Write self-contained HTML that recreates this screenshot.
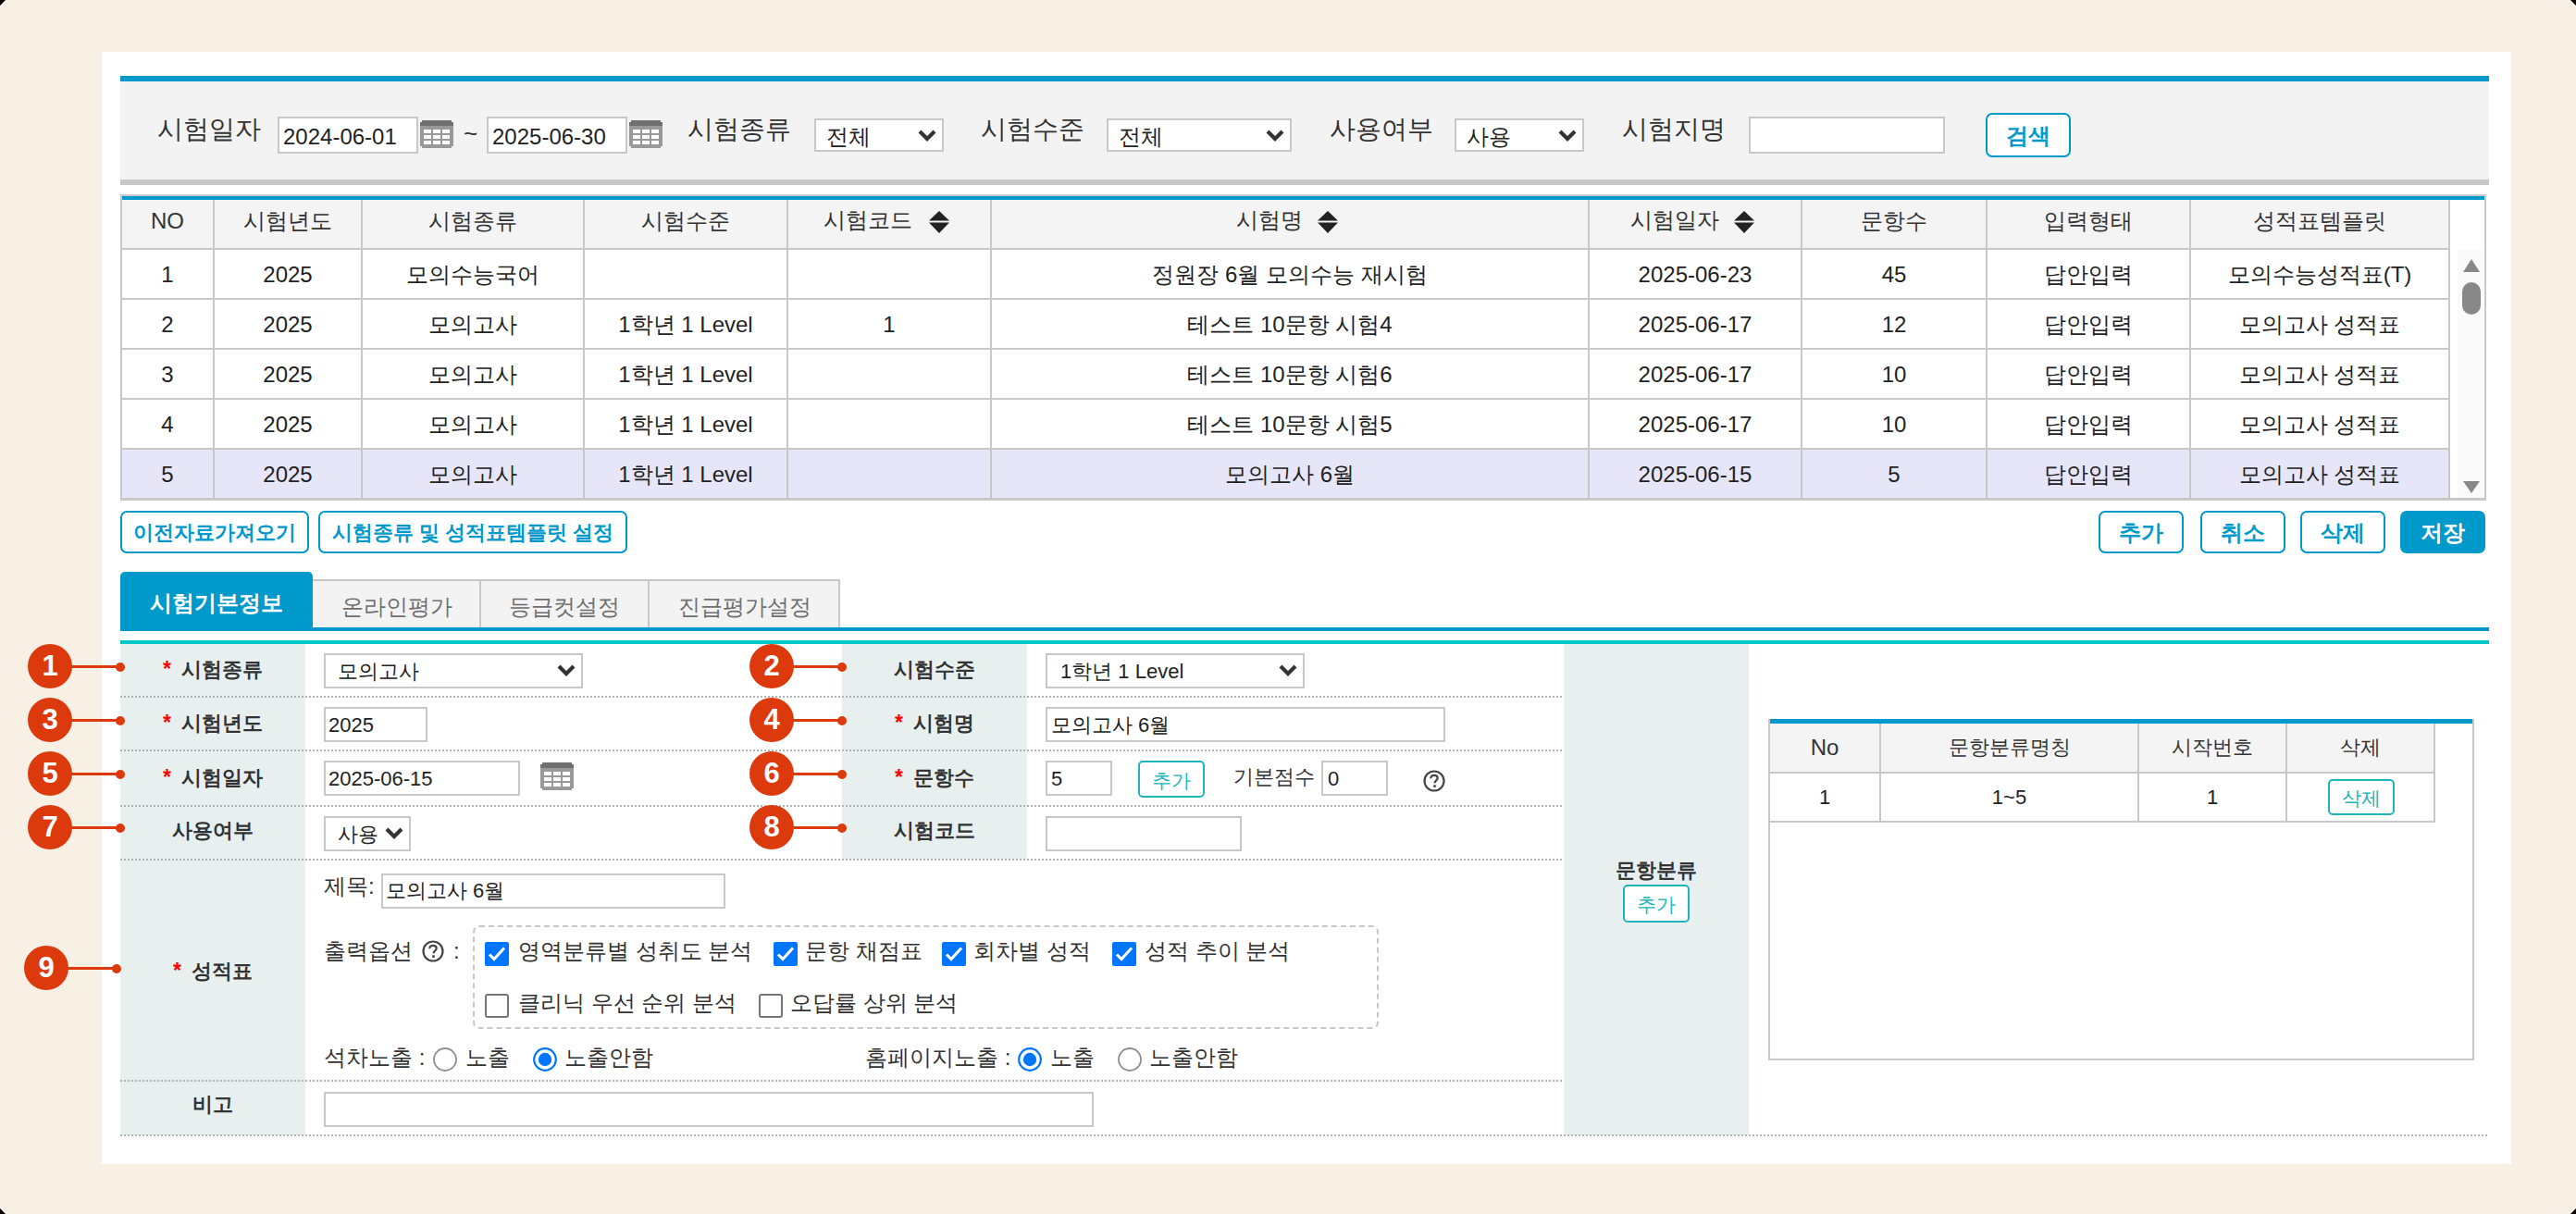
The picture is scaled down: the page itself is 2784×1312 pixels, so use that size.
<!DOCTYPE html>
<html><head><meta charset="utf-8"><title>시험관리</title>
<style>
*{margin:0;padding:0;box-sizing:border-box}
html,body{width:2784px;height:1312px;overflow:hidden}
body{background:#f8efe5;position:relative;font-family:"Liberation Sans",sans-serif;color:#333}
.a{position:absolute}
.t{position:absolute;white-space:nowrap}
</style></head><body>
<svg class="a" style="left:0;top:0" width="7" height="7"><path d="M0 0H6L0 6Z" fill="#000"/></svg>
<svg class="a" style="left:2777px;top:0" width="7" height="7"><path d="M1 0H7V6Z" fill="#000"/></svg>
<svg class="a" style="left:0;top:1305px" width="7" height="7"><path d="M0 1V7H6Z" fill="#000"/></svg>
<svg class="a" style="left:2777px;top:1305px" width="7" height="7"><path d="M7 1V7H1Z" fill="#000"/></svg>
<div class="a" style="left:110px;top:56px;width:2604px;height:1202px;background:#fff"></div>
<div class="a" style="left:130px;top:82px;width:2560px;height:6px;background:#0099cc"></div>
<div class="a" style="left:130px;top:88px;width:2560px;height:106px;background:#f3f3f3"></div>
<div class="a" style="left:130px;top:194px;width:2560px;height:6px;background:#c8c8c8"></div>
<div class="t" style="left:170px;top:126.0px;height:28px;font-size:28px;line-height:28px;">시험일자</div>
<div class="a" style="left:300px;top:126px;width:152px;height:40px;background:#fff;border:2px solid #c8c8c8"></div>
<div class="t" style="left:306px;top:135.5px;height:24px;font-size:24px;line-height:24px;color:#222;">2024-06-01</div>
<svg class="a" style="left:454px;top:130px" width="36" height="30" viewBox="0 0 36 30"><path d="M2 0H34V2H36V28H34V30H2V28H0V2H2Z" fill="#999"/><path d="M2 0H34V2H36V6H0V2H2Z" fill="#707070"/><rect x="4" y="10" width="8" height="4" fill="#fff"/><rect x="4" y="16" width="8" height="4" fill="#fff"/><rect x="4" y="22" width="8" height="4" fill="#fff"/><rect x="14" y="10" width="8" height="4" fill="#fff"/><rect x="14" y="16" width="8" height="4" fill="#fff"/><rect x="14" y="22" width="8" height="4" fill="#fff"/><rect x="24" y="10" width="8" height="4" fill="#fff"/><rect x="24" y="16" width="8" height="4" fill="#fff"/><rect x="24" y="22" width="8" height="4" fill="#fff"/></svg>
<div class="t" style="left:501px;top:130.5px;height:26px;font-size:26px;line-height:26px;">~</div>
<div class="a" style="left:526px;top:126px;width:152px;height:40px;background:#fff;border:2px solid #c8c8c8"></div>
<div class="t" style="left:532px;top:135.5px;height:24px;font-size:24px;line-height:24px;color:#222;">2025-06-30</div>
<svg class="a" style="left:680px;top:130px" width="36" height="30" viewBox="0 0 36 30"><path d="M2 0H34V2H36V28H34V30H2V28H0V2H2Z" fill="#999"/><path d="M2 0H34V2H36V6H0V2H2Z" fill="#707070"/><rect x="4" y="10" width="8" height="4" fill="#fff"/><rect x="4" y="16" width="8" height="4" fill="#fff"/><rect x="4" y="22" width="8" height="4" fill="#fff"/><rect x="14" y="10" width="8" height="4" fill="#fff"/><rect x="14" y="16" width="8" height="4" fill="#fff"/><rect x="14" y="22" width="8" height="4" fill="#fff"/><rect x="24" y="10" width="8" height="4" fill="#fff"/><rect x="24" y="16" width="8" height="4" fill="#fff"/><rect x="24" y="22" width="8" height="4" fill="#fff"/></svg>
<div class="t" style="left:743px;top:126.0px;height:28px;font-size:28px;line-height:28px;">시험종류</div>
<div class="a" style="left:880px;top:128px;width:140px;height:36px;background:#fff;border:2px solid #c8c8c8"></div>
<div class="t" style="left:893px;top:135.5px;height:24px;font-size:24px;line-height:24px;color:#222;">전체</div>
<svg class="a" style="left:992px;top:140px" width="20" height="13" viewBox="0 0 20 13"><path d="M2 2 L10 10 L18 2" fill="none" stroke="#333" stroke-width="4.2"/></svg>
<div class="t" style="left:1060px;top:126.0px;height:28px;font-size:28px;line-height:28px;">시험수준</div>
<div class="a" style="left:1196px;top:128px;width:200px;height:36px;background:#fff;border:2px solid #c8c8c8"></div>
<div class="t" style="left:1209px;top:135.5px;height:24px;font-size:24px;line-height:24px;color:#222;">전체</div>
<svg class="a" style="left:1368px;top:140px" width="20" height="13" viewBox="0 0 20 13"><path d="M2 2 L10 10 L18 2" fill="none" stroke="#333" stroke-width="4.2"/></svg>
<div class="t" style="left:1437px;top:126.0px;height:28px;font-size:28px;line-height:28px;">사용여부</div>
<div class="a" style="left:1572px;top:128px;width:140px;height:36px;background:#fff;border:2px solid #c8c8c8"></div>
<div class="t" style="left:1585px;top:135.5px;height:24px;font-size:24px;line-height:24px;color:#222;">사용</div>
<svg class="a" style="left:1684px;top:140px" width="20" height="13" viewBox="0 0 20 13"><path d="M2 2 L10 10 L18 2" fill="none" stroke="#333" stroke-width="4.2"/></svg>
<div class="t" style="left:1753px;top:126.0px;height:28px;font-size:28px;line-height:28px;">시험지명</div>
<div class="a" style="left:1890px;top:126px;width:212px;height:40px;background:#fff;border:2px solid #c8c8c8"></div>
<div class="a" style="left:2146px;top:122px;width:92px;height:48px;background:#fff;border:2px solid #0099cc;border-radius:7px"></div>
<div class="t" style="left:2146px;width:92px;text-align:center;top:135.0px;height:24px;font-size:24px;line-height:24px;font-weight:700;color:#0099cc;">검색</div>
<div class="a" style="left:130px;top:210px;width:2557px;height:331px;background:#fff;border:2px solid #c8c8c8;border-bottom-width:3px"></div>
<div class="a" style="left:132px;top:212px;width:2553px;height:4px;background:#0099cc"></div>
<div class="a" style="left:132px;top:216px;width:2514px;height:52px;background:#f4f4f4"></div>
<div class="a" style="left:132px;top:484px;width:2514px;height:54px;background:#e6e6f8"></div>
<div class="a" style="left:2656px;top:270px;width:28px;height:268px;background:#fafafa"></div>
<div class="a" style="left:230px;top:216px;width:2px;height:322px;background:#c8c8c8"></div>
<div class="a" style="left:390px;top:216px;width:2px;height:322px;background:#c8c8c8"></div>
<div class="a" style="left:630px;top:216px;width:2px;height:322px;background:#c8c8c8"></div>
<div class="a" style="left:850px;top:216px;width:2px;height:322px;background:#c8c8c8"></div>
<div class="a" style="left:1070px;top:216px;width:2px;height:322px;background:#c8c8c8"></div>
<div class="a" style="left:1716px;top:216px;width:2px;height:322px;background:#c8c8c8"></div>
<div class="a" style="left:1946px;top:216px;width:2px;height:322px;background:#c8c8c8"></div>
<div class="a" style="left:2146px;top:216px;width:2px;height:322px;background:#c8c8c8"></div>
<div class="a" style="left:2366px;top:216px;width:2px;height:322px;background:#c8c8c8"></div>
<div class="a" style="left:2646px;top:216px;width:2px;height:322px;background:#c8c8c8"></div>
<div class="a" style="left:132px;top:268px;width:2514px;height:2px;background:#c8c8c8"></div>
<div class="a" style="left:132px;top:322px;width:2514px;height:2px;background:#c8c8c8"></div>
<div class="a" style="left:132px;top:376px;width:2514px;height:2px;background:#c8c8c8"></div>
<div class="a" style="left:132px;top:430px;width:2514px;height:2px;background:#c8c8c8"></div>
<div class="a" style="left:132px;top:484px;width:2514px;height:2px;background:#c8c8c8"></div>
<div class="t" style="left:132px;width:98px;text-align:center;top:227.0px;height:24px;font-size:24px;line-height:24px;">NO</div>
<div class="t" style="left:232px;width:158px;text-align:center;top:227.0px;height:24px;font-size:24px;line-height:24px;">시험년도</div>
<div class="t" style="left:392px;width:238px;text-align:center;top:227.0px;height:24px;font-size:24px;line-height:24px;">시험종류</div>
<div class="t" style="left:632px;width:218px;text-align:center;top:227.0px;height:24px;font-size:24px;line-height:24px;">시험수준</div>
<div class="t" style="left:890px;top:226.0px;height:24px;font-size:24px;line-height:24px;">시험코드</div>
<svg class="a" style="left:1004px;top:228px" width="22" height="24" viewBox="0 0 22 24"><path d="M0 10.5L11 0L22 10.5Z M0 12.5H22L11 24Z" fill="#222"/></svg>
<div class="t" style="left:1336px;top:226.0px;height:24px;font-size:24px;line-height:24px;">시험명</div>
<svg class="a" style="left:1424px;top:228px" width="22" height="24" viewBox="0 0 22 24"><path d="M0 10.5L11 0L22 10.5Z M0 12.5H22L11 24Z" fill="#222"/></svg>
<div class="t" style="left:1762px;top:226.0px;height:24px;font-size:24px;line-height:24px;">시험일자</div>
<svg class="a" style="left:1874px;top:228px" width="22" height="24" viewBox="0 0 22 24"><path d="M0 10.5L11 0L22 10.5Z M0 12.5H22L11 24Z" fill="#222"/></svg>
<div class="t" style="left:1948px;width:198px;text-align:center;top:227.0px;height:24px;font-size:24px;line-height:24px;">문항수</div>
<div class="t" style="left:2148px;width:218px;text-align:center;top:227.0px;height:24px;font-size:24px;line-height:24px;">입력형태</div>
<div class="t" style="left:2368px;width:278px;text-align:center;top:227.0px;height:24px;font-size:24px;line-height:24px;">성적표템플릿</div>
<div class="t" style="left:132px;width:98px;text-align:center;top:285.0px;height:24px;font-size:24px;line-height:24px;color:#222;">1</div>
<div class="t" style="left:232px;width:158px;text-align:center;top:285.0px;height:24px;font-size:24px;line-height:24px;color:#222;">2025</div>
<div class="t" style="left:392px;width:238px;text-align:center;top:285.0px;height:24px;font-size:24px;line-height:24px;color:#222;">모의수능국어</div>
<div class="t" style="left:1072px;width:644px;text-align:center;top:285.0px;height:24px;font-size:24px;line-height:24px;color:#222;">정원장 6월 모의수능 재시험</div>
<div class="t" style="left:1718px;width:228px;text-align:center;top:285.0px;height:24px;font-size:24px;line-height:24px;color:#222;">2025-06-23</div>
<div class="t" style="left:1948px;width:198px;text-align:center;top:285.0px;height:24px;font-size:24px;line-height:24px;color:#222;">45</div>
<div class="t" style="left:2148px;width:218px;text-align:center;top:285.0px;height:24px;font-size:24px;line-height:24px;color:#222;">답안입력</div>
<div class="t" style="left:2368px;width:278px;text-align:center;top:285.0px;height:24px;font-size:24px;line-height:24px;color:#222;">모의수능성적표(T)</div>
<div class="t" style="left:132px;width:98px;text-align:center;top:339.0px;height:24px;font-size:24px;line-height:24px;color:#222;">2</div>
<div class="t" style="left:232px;width:158px;text-align:center;top:339.0px;height:24px;font-size:24px;line-height:24px;color:#222;">2025</div>
<div class="t" style="left:392px;width:238px;text-align:center;top:339.0px;height:24px;font-size:24px;line-height:24px;color:#222;">모의고사</div>
<div class="t" style="left:632px;width:218px;text-align:center;top:339.0px;height:24px;font-size:24px;line-height:24px;color:#222;">1학년 1 Level</div>
<div class="t" style="left:852px;width:218px;text-align:center;top:339.0px;height:24px;font-size:24px;line-height:24px;color:#222;">1</div>
<div class="t" style="left:1072px;width:644px;text-align:center;top:339.0px;height:24px;font-size:24px;line-height:24px;color:#222;">테스트 10문항 시험4</div>
<div class="t" style="left:1718px;width:228px;text-align:center;top:339.0px;height:24px;font-size:24px;line-height:24px;color:#222;">2025-06-17</div>
<div class="t" style="left:1948px;width:198px;text-align:center;top:339.0px;height:24px;font-size:24px;line-height:24px;color:#222;">12</div>
<div class="t" style="left:2148px;width:218px;text-align:center;top:339.0px;height:24px;font-size:24px;line-height:24px;color:#222;">답안입력</div>
<div class="t" style="left:2368px;width:278px;text-align:center;top:339.0px;height:24px;font-size:24px;line-height:24px;color:#222;">모의고사 성적표</div>
<div class="t" style="left:132px;width:98px;text-align:center;top:393.0px;height:24px;font-size:24px;line-height:24px;color:#222;">3</div>
<div class="t" style="left:232px;width:158px;text-align:center;top:393.0px;height:24px;font-size:24px;line-height:24px;color:#222;">2025</div>
<div class="t" style="left:392px;width:238px;text-align:center;top:393.0px;height:24px;font-size:24px;line-height:24px;color:#222;">모의고사</div>
<div class="t" style="left:632px;width:218px;text-align:center;top:393.0px;height:24px;font-size:24px;line-height:24px;color:#222;">1학년 1 Level</div>
<div class="t" style="left:1072px;width:644px;text-align:center;top:393.0px;height:24px;font-size:24px;line-height:24px;color:#222;">테스트 10문항 시험6</div>
<div class="t" style="left:1718px;width:228px;text-align:center;top:393.0px;height:24px;font-size:24px;line-height:24px;color:#222;">2025-06-17</div>
<div class="t" style="left:1948px;width:198px;text-align:center;top:393.0px;height:24px;font-size:24px;line-height:24px;color:#222;">10</div>
<div class="t" style="left:2148px;width:218px;text-align:center;top:393.0px;height:24px;font-size:24px;line-height:24px;color:#222;">답안입력</div>
<div class="t" style="left:2368px;width:278px;text-align:center;top:393.0px;height:24px;font-size:24px;line-height:24px;color:#222;">모의고사 성적표</div>
<div class="t" style="left:132px;width:98px;text-align:center;top:447.0px;height:24px;font-size:24px;line-height:24px;color:#222;">4</div>
<div class="t" style="left:232px;width:158px;text-align:center;top:447.0px;height:24px;font-size:24px;line-height:24px;color:#222;">2025</div>
<div class="t" style="left:392px;width:238px;text-align:center;top:447.0px;height:24px;font-size:24px;line-height:24px;color:#222;">모의고사</div>
<div class="t" style="left:632px;width:218px;text-align:center;top:447.0px;height:24px;font-size:24px;line-height:24px;color:#222;">1학년 1 Level</div>
<div class="t" style="left:1072px;width:644px;text-align:center;top:447.0px;height:24px;font-size:24px;line-height:24px;color:#222;">테스트 10문항 시험5</div>
<div class="t" style="left:1718px;width:228px;text-align:center;top:447.0px;height:24px;font-size:24px;line-height:24px;color:#222;">2025-06-17</div>
<div class="t" style="left:1948px;width:198px;text-align:center;top:447.0px;height:24px;font-size:24px;line-height:24px;color:#222;">10</div>
<div class="t" style="left:2148px;width:218px;text-align:center;top:447.0px;height:24px;font-size:24px;line-height:24px;color:#222;">답안입력</div>
<div class="t" style="left:2368px;width:278px;text-align:center;top:447.0px;height:24px;font-size:24px;line-height:24px;color:#222;">모의고사 성적표</div>
<div class="t" style="left:132px;width:98px;text-align:center;top:501.0px;height:24px;font-size:24px;line-height:24px;color:#222;">5</div>
<div class="t" style="left:232px;width:158px;text-align:center;top:501.0px;height:24px;font-size:24px;line-height:24px;color:#222;">2025</div>
<div class="t" style="left:392px;width:238px;text-align:center;top:501.0px;height:24px;font-size:24px;line-height:24px;color:#222;">모의고사</div>
<div class="t" style="left:632px;width:218px;text-align:center;top:501.0px;height:24px;font-size:24px;line-height:24px;color:#222;">1학년 1 Level</div>
<div class="t" style="left:1072px;width:644px;text-align:center;top:501.0px;height:24px;font-size:24px;line-height:24px;color:#222;">모의고사 6월</div>
<div class="t" style="left:1718px;width:228px;text-align:center;top:501.0px;height:24px;font-size:24px;line-height:24px;color:#222;">2025-06-15</div>
<div class="t" style="left:1948px;width:198px;text-align:center;top:501.0px;height:24px;font-size:24px;line-height:24px;color:#222;">5</div>
<div class="t" style="left:2148px;width:218px;text-align:center;top:501.0px;height:24px;font-size:24px;line-height:24px;color:#222;">답안입력</div>
<div class="t" style="left:2368px;width:278px;text-align:center;top:501.0px;height:24px;font-size:24px;line-height:24px;color:#222;">모의고사 성적표</div>
<svg class="a" style="left:2661px;top:279px" width="20" height="16" viewBox="0 0 20 16"><path d="M10 1L19 15H1Z" fill="#888"/></svg>
<div class="a" style="left:2661px;top:305px;width:20px;height:35px;background:#888;border-radius:10px"></div>
<svg class="a" style="left:2661px;top:519px" width="20" height="15" viewBox="0 0 20 15"><path d="M1 1H19L10 14Z" fill="#888"/></svg>
<div class="a" style="left:130px;top:552px;width:204px;height:46px;background:#fff;border:2px solid #0099cc;border-radius:7px"></div>
<div class="t" style="left:130px;width:204px;text-align:center;top:565.0px;height:22px;font-size:22px;line-height:22px;font-weight:700;color:#0099cc;">이전자료가져오기</div>
<div class="a" style="left:344px;top:552px;width:334px;height:46px;background:#fff;border:2px solid #0099cc;border-radius:7px"></div>
<div class="t" style="left:344px;width:334px;text-align:center;top:565.0px;height:22px;font-size:22px;line-height:22px;font-weight:700;color:#0099cc;">시험종류 및 성적표템플릿 설정</div>
<div class="a" style="left:2268px;top:552px;width:92px;height:46px;background:#fff;border:2px solid #0099cc;border-radius:7px"></div>
<div class="t" style="left:2268px;width:92px;text-align:center;top:564.0px;height:24px;font-size:24px;line-height:24px;font-weight:700;color:#0099cc;">추가</div>
<div class="a" style="left:2378px;top:552px;width:92px;height:46px;background:#fff;border:2px solid #0099cc;border-radius:7px"></div>
<div class="t" style="left:2378px;width:92px;text-align:center;top:564.0px;height:24px;font-size:24px;line-height:24px;font-weight:700;color:#0099cc;">취소</div>
<div class="a" style="left:2486px;top:552px;width:92px;height:46px;background:#fff;border:2px solid #0099cc;border-radius:7px"></div>
<div class="t" style="left:2486px;width:92px;text-align:center;top:564.0px;height:24px;font-size:24px;line-height:24px;font-weight:700;color:#0099cc;">삭제</div>
<div class="a" style="left:2594px;top:552px;width:92px;height:46px;background:#0099cc;border-radius:7px"></div>
<div class="t" style="left:2594px;width:92px;text-align:center;top:564.0px;height:24px;font-size:24px;line-height:24px;font-weight:700;color:#fff;">저장</div>
<div class="a" style="left:338px;top:626px;width:570px;height:54px;background:#f3f3f3;border:2px solid #c8c8c8;border-bottom:none;border-left:none"></div>
<div class="a" style="left:518px;top:626px;width:2px;height:54px;background:#c8c8c8"></div>
<div class="a" style="left:700px;top:626px;width:2px;height:54px;background:#c8c8c8"></div>
<div class="a" style="left:130px;top:618px;width:208px;height:64px;background:#0099cc;border-radius:5px 5px 0 0"></div>
<div class="t" style="left:130px;width:208px;text-align:center;top:640.0px;height:24px;font-size:24px;line-height:24px;font-weight:700;color:#fff;">시험기본정보</div>
<div class="t" style="left:338px;width:181px;text-align:center;top:644.0px;height:24px;font-size:24px;line-height:24px;color:#6f6f6f;">온라인평가</div>
<div class="t" style="left:519px;width:182px;text-align:center;top:644.0px;height:24px;font-size:24px;line-height:24px;color:#6f6f6f;">등급컷설정</div>
<div class="t" style="left:701px;width:207px;text-align:center;top:644.0px;height:24px;font-size:24px;line-height:24px;color:#6f6f6f;">진급평가설정</div>
<div class="a" style="left:130px;top:678px;width:2560px;height:4px;background:#0099cc"></div>
<div class="a" style="left:130px;top:692px;width:2560px;height:4px;background:#00c8c8"></div>
<div class="a" style="left:130px;top:696px;width:200px;height:531px;background:#e8f0ef"></div>
<div class="a" style="left:910px;top:696px;width:200px;height:233px;background:#e8f0ef"></div>
<div class="a" style="left:1690px;top:696px;width:200px;height:531px;background:#e8f0ef"></div>
<div class="a" style="left:130px;top:752px;width:1560px;height:2px;background-image:linear-gradient(90deg,#b4b4b4 50%,transparent 50%);background-size:4px 2px"></div>
<div class="a" style="left:130px;top:810px;width:1560px;height:2px;background-image:linear-gradient(90deg,#b4b4b4 50%,transparent 50%);background-size:4px 2px"></div>
<div class="a" style="left:130px;top:870px;width:1560px;height:2px;background-image:linear-gradient(90deg,#b4b4b4 50%,transparent 50%);background-size:4px 2px"></div>
<div class="a" style="left:130px;top:928px;width:1560px;height:2px;background-image:linear-gradient(90deg,#b4b4b4 50%,transparent 50%);background-size:4px 2px"></div>
<div class="a" style="left:130px;top:1167px;width:1560px;height:2px;background-image:linear-gradient(90deg,#b4b4b4 50%,transparent 50%);background-size:4px 2px"></div>
<div class="a" style="left:130px;top:1226px;width:2560px;height:2px;background-image:linear-gradient(90deg,#b4b4b4 50%,transparent 50%);background-size:4px 2px"></div>
<div class="t" style="left:130px;width:200px;text-align:center;top:712px;height:22px;font-size:22px;line-height:22px;font-weight:700"><span style="color:#f00;font-size:23px;position:relative;top:0px;margin-right:5px">*</span> 시험종류</div>
<div class="t" style="left:130px;width:200px;text-align:center;top:770px;height:22px;font-size:22px;line-height:22px;font-weight:700"><span style="color:#f00;font-size:23px;position:relative;top:0px;margin-right:5px">*</span> 시험년도</div>
<div class="t" style="left:130px;width:200px;text-align:center;top:829px;height:22px;font-size:22px;line-height:22px;font-weight:700"><span style="color:#f00;font-size:23px;position:relative;top:0px;margin-right:5px">*</span> 시험일자</div>
<div class="t" style="left:130px;width:200px;text-align:center;top:887.0px;height:22px;font-size:22px;line-height:22px;font-weight:700;">사용여부</div>
<div class="t" style="left:130px;width:200px;text-align:center;top:1038px;height:22px;font-size:22px;line-height:22px;font-weight:700"><span style="color:#f00;font-size:23px;position:relative;top:0px;margin-right:5px">*</span> 성적표</div>
<div class="t" style="left:130px;width:200px;text-align:center;top:1183.0px;height:22px;font-size:22px;line-height:22px;font-weight:700;">비고</div>
<div class="t" style="left:910px;width:200px;text-align:center;top:712.5px;height:22px;font-size:22px;line-height:22px;font-weight:700;">시험수준</div>
<div class="t" style="left:910px;width:200px;text-align:center;top:769.5px;height:22px;font-size:22px;line-height:22px;font-weight:700"><span style="color:#f00;font-size:23px;position:relative;top:0px;margin-right:5px">*</span> 시험명</div>
<div class="t" style="left:910px;width:200px;text-align:center;top:829px;height:22px;font-size:22px;line-height:22px;font-weight:700"><span style="color:#f00;font-size:23px;position:relative;top:0px;margin-right:5px">*</span> 문항수</div>
<div class="t" style="left:910px;width:200px;text-align:center;top:887.0px;height:22px;font-size:22px;line-height:22px;font-weight:700;">시험코드</div>
<div class="a" style="left:350px;top:706px;width:280px;height:38px;background:#fff;border:2px solid #c8c8c8"></div>
<div class="t" style="left:365px;top:715.0px;height:22px;font-size:22px;line-height:22px;color:#222;">모의고사</div>
<svg class="a" style="left:602px;top:718px" width="20" height="13" viewBox="0 0 20 13"><path d="M2 2 L10 10 L18 2" fill="none" stroke="#333" stroke-width="4.2"/></svg>
<div class="a" style="left:350px;top:764px;width:112px;height:38px;background:#fff;border:2px solid #c8c8c8"></div>
<div class="t" style="left:355px;top:773.0px;height:22px;font-size:22px;line-height:22px;color:#222;">2025</div>
<div class="a" style="left:350px;top:822px;width:212px;height:38px;background:#fff;border:2px solid #c8c8c8"></div>
<div class="t" style="left:355px;top:831.0px;height:22px;font-size:22px;line-height:22px;color:#222;">2025-06-15</div>
<svg class="a" style="left:584px;top:824px" width="36" height="30" viewBox="0 0 36 30"><path d="M2 0H34V2H36V28H34V30H2V28H0V2H2Z" fill="#999"/><path d="M2 0H34V2H36V6H0V2H2Z" fill="#707070"/><rect x="4" y="10" width="8" height="4" fill="#fff"/><rect x="4" y="16" width="8" height="4" fill="#fff"/><rect x="4" y="22" width="8" height="4" fill="#fff"/><rect x="14" y="10" width="8" height="4" fill="#fff"/><rect x="14" y="16" width="8" height="4" fill="#fff"/><rect x="14" y="22" width="8" height="4" fill="#fff"/><rect x="24" y="10" width="8" height="4" fill="#fff"/><rect x="24" y="16" width="8" height="4" fill="#fff"/><rect x="24" y="22" width="8" height="4" fill="#fff"/></svg>
<div class="a" style="left:350px;top:882px;width:94px;height:38px;background:#fff;border:2px solid #c8c8c8"></div>
<div class="t" style="left:365px;top:891.0px;height:22px;font-size:22px;line-height:22px;color:#222;">사용</div>
<svg class="a" style="left:416px;top:894px" width="20" height="13" viewBox="0 0 20 13"><path d="M2 2 L10 10 L18 2" fill="none" stroke="#333" stroke-width="4.2"/></svg>
<div class="a" style="left:1130px;top:706px;width:280px;height:38px;background:#fff;border:2px solid #c8c8c8"></div>
<div class="t" style="left:1146px;top:715.0px;height:22px;font-size:22px;line-height:22px;color:#222;">1학년 1 Level</div>
<svg class="a" style="left:1382px;top:718px" width="20" height="13" viewBox="0 0 20 13"><path d="M2 2 L10 10 L18 2" fill="none" stroke="#333" stroke-width="4.2"/></svg>
<div class="a" style="left:1130px;top:764px;width:432px;height:38px;background:#fff;border:2px solid #c8c8c8"></div>
<div class="t" style="left:1136px;top:773.0px;height:22px;font-size:22px;line-height:22px;color:#222;">모의고사 6월</div>
<div class="a" style="left:1130px;top:822px;width:72px;height:38px;background:#fff;border:2px solid #c8c8c8"></div>
<div class="t" style="left:1136px;top:831.0px;height:22px;font-size:22px;line-height:22px;color:#222;">5</div>
<div class="a" style="left:1230px;top:822px;width:72px;height:40px;background:#fff;border:2px solid #20b5b8;border-radius:5px"></div>
<div class="t" style="left:1230px;width:72px;text-align:center;top:832.5px;height:21px;font-size:21px;line-height:21px;color:#20b5b8;">추가</div>
<div class="t" style="left:1333px;top:829.0px;height:22px;font-size:22px;line-height:22px;">기본점수</div>
<div class="a" style="left:1428px;top:822px;width:72px;height:38px;background:#fff;border:2px solid #c8c8c8"></div>
<div class="t" style="left:1435px;top:831.0px;height:22px;font-size:22px;line-height:22px;color:#222;">0</div>
<svg class="a" style="left:1538px;top:832px" width="24" height="24" viewBox="0 0 24 24"><circle cx="12" cy="12" r="10.5" fill="none" stroke="#444" stroke-width="2.2"/><path d="M8.3 9.2C8.3 7 9.8 5.8 12 5.8C14.2 5.8 15.7 7.1 15.7 9C15.7 11.3 12.6 11.6 12.6 14.3" fill="none" stroke="#444" stroke-width="2.2"/><rect x="11.2" y="16.3" width="2.6" height="2.6" fill="#444"/></svg>
<div class="a" style="left:1130px;top:882px;width:212px;height:38px;background:#fff;border:2px solid #c8c8c8"></div>
<div class="t" style="left:350px;top:946.0px;height:24px;font-size:24px;line-height:24px;">제목:</div>
<div class="a" style="left:412px;top:944px;width:372px;height:38px;background:#fff;border:2px solid #c8c8c8"></div>
<div class="t" style="left:417px;top:952.0px;height:22px;font-size:22px;line-height:22px;color:#222;">모의고사 6월</div>
<div class="t" style="left:350px;top:1016.0px;height:24px;font-size:24px;line-height:24px;">출력옵션</div>
<svg class="a" style="left:456px;top:1016px" width="24" height="24" viewBox="0 0 24 24"><circle cx="12" cy="12" r="10.5" fill="none" stroke="#444" stroke-width="2.2"/><path d="M8.3 9.2C8.3 7 9.8 5.8 12 5.8C14.2 5.8 15.7 7.1 15.7 9C15.7 11.3 12.6 11.6 12.6 14.3" fill="none" stroke="#444" stroke-width="2.2"/><rect x="11.2" y="16.3" width="2.6" height="2.6" fill="#444"/></svg>
<div class="t" style="left:490px;top:1016.0px;height:24px;font-size:24px;line-height:24px;">:</div>
<div class="a" style="left:511px;top:1000px;width:979px;height:112px;border:2px dashed #c8c8c8;border-radius:7px"></div>
<svg class="a" style="left:524px;top:1018px" width="26" height="26" viewBox="0 0 26 26"><rect x="0" y="0" width="26" height="26" rx="2" fill="#0075ff"/><path d="M5 13.5L10 18.5L21 6.5" fill="none" stroke="#fff" stroke-width="3.1"/></svg>
<div class="t" style="left:560px;top:1016.0px;height:24px;font-size:24px;line-height:24px;">영역분류별 성취도 분석</div>
<svg class="a" style="left:836px;top:1018px" width="26" height="26" viewBox="0 0 26 26"><rect x="0" y="0" width="26" height="26" rx="2" fill="#0075ff"/><path d="M5 13.5L10 18.5L21 6.5" fill="none" stroke="#fff" stroke-width="3.1"/></svg>
<div class="t" style="left:870px;top:1016.0px;height:24px;font-size:24px;line-height:24px;">문항 채점표</div>
<svg class="a" style="left:1018px;top:1018px" width="26" height="26" viewBox="0 0 26 26"><rect x="0" y="0" width="26" height="26" rx="2" fill="#0075ff"/><path d="M5 13.5L10 18.5L21 6.5" fill="none" stroke="#fff" stroke-width="3.1"/></svg>
<div class="t" style="left:1052px;top:1016.0px;height:24px;font-size:24px;line-height:24px;">회차별 성적</div>
<svg class="a" style="left:1202px;top:1018px" width="26" height="26" viewBox="0 0 26 26"><rect x="0" y="0" width="26" height="26" rx="2" fill="#0075ff"/><path d="M5 13.5L10 18.5L21 6.5" fill="none" stroke="#fff" stroke-width="3.1"/></svg>
<div class="t" style="left:1237px;top:1016.0px;height:24px;font-size:24px;line-height:24px;">성적 추이 분석</div>
<svg class="a" style="left:524px;top:1074px" width="26" height="26" viewBox="0 0 26 26"><rect x="1" y="1" width="24" height="24" rx="2" fill="#fff" stroke="#767676" stroke-width="2"/></svg>
<div class="t" style="left:560px;top:1072.0px;height:24px;font-size:24px;line-height:24px;">클리닉 우선 순위 분석</div>
<svg class="a" style="left:820px;top:1074px" width="26" height="26" viewBox="0 0 26 26"><rect x="1" y="1" width="24" height="24" rx="2" fill="#fff" stroke="#767676" stroke-width="2"/></svg>
<div class="t" style="left:854px;top:1072.0px;height:24px;font-size:24px;line-height:24px;">오답률 상위 분석</div>
<div class="t" style="left:350px;top:1131.0px;height:24px;font-size:24px;line-height:24px;">석차노출 :</div>
<svg class="a" style="left:468px;top:1132px" width="26" height="26" viewBox="0 0 26 26"><circle cx="13" cy="13" r="12" fill="#fff" stroke="#8f8f8f" stroke-width="1.8"/></svg>
<div class="t" style="left:503px;top:1131.0px;height:24px;font-size:24px;line-height:24px;">노출</div>
<svg class="a" style="left:576px;top:1132px" width="26" height="26" viewBox="0 0 26 26"><circle cx="13" cy="13" r="11.8" fill="#fff" stroke="#0075ff" stroke-width="2.2"/><circle cx="13" cy="13" r="7.2" fill="#0075ff"/></svg>
<div class="t" style="left:610px;top:1131.0px;height:24px;font-size:24px;line-height:24px;">노출안함</div>
<div class="t" style="left:935px;top:1131.0px;height:24px;font-size:24px;line-height:24px;">홈페이지노출 :</div>
<svg class="a" style="left:1100px;top:1132px" width="26" height="26" viewBox="0 0 26 26"><circle cx="13" cy="13" r="11.8" fill="#fff" stroke="#0075ff" stroke-width="2.2"/><circle cx="13" cy="13" r="7.2" fill="#0075ff"/></svg>
<div class="t" style="left:1135px;top:1131.0px;height:24px;font-size:24px;line-height:24px;">노출</div>
<svg class="a" style="left:1208px;top:1132px" width="26" height="26" viewBox="0 0 26 26"><circle cx="13" cy="13" r="12" fill="#fff" stroke="#8f8f8f" stroke-width="1.8"/></svg>
<div class="t" style="left:1242px;top:1131.0px;height:24px;font-size:24px;line-height:24px;">노출안함</div>
<div class="a" style="left:350px;top:1180px;width:832px;height:38px;background:#fff;border:2px solid #c8c8c8"></div>
<div class="t" style="left:1690px;width:200px;text-align:center;top:930.0px;height:22px;font-size:22px;line-height:22px;font-weight:700;">문항분류</div>
<div class="a" style="left:1754px;top:956px;width:72px;height:41px;background:#fff;border:2px solid #20b5b8;border-radius:5px"></div>
<div class="t" style="left:1754px;width:72px;text-align:center;top:967.0px;height:21px;font-size:21px;line-height:21px;color:#20b5b8;">추가</div>
<div class="a" style="left:1911px;top:777px;width:763px;height:369px;background:#fff;border:2px solid #c8c8c8"></div>
<div class="a" style="left:1913px;top:777px;width:759px;height:5px;background:#0099cc"></div>
<div class="a" style="left:1913px;top:782px;width:718px;height:52px;background:#f4f4f4"></div>
<div class="a" style="left:2031px;top:782px;width:2px;height:107px;background:#c8c8c8"></div>
<div class="a" style="left:2310px;top:782px;width:2px;height:107px;background:#c8c8c8"></div>
<div class="a" style="left:2470px;top:782px;width:2px;height:107px;background:#c8c8c8"></div>
<div class="a" style="left:2630px;top:782px;width:2px;height:107px;background:#c8c8c8"></div>
<div class="a" style="left:1913px;top:834px;width:719px;height:2px;background:#c8c8c8"></div>
<div class="a" style="left:1913px;top:887px;width:719px;height:2px;background:#c8c8c8"></div>
<div class="t" style="left:1913px;width:118px;text-align:center;top:796.0px;height:24px;font-size:24px;line-height:24px;">No</div>
<div class="t" style="left:2033px;width:277px;text-align:center;top:797.0px;height:22px;font-size:22px;line-height:22px;">문항분류명칭</div>
<div class="t" style="left:2312px;width:158px;text-align:center;top:797.0px;height:22px;font-size:22px;line-height:22px;">시작번호</div>
<div class="t" style="left:2472px;width:158px;text-align:center;top:797.0px;height:22px;font-size:22px;line-height:22px;">삭제</div>
<div class="t" style="left:1913px;width:118px;text-align:center;top:851.0px;height:22px;font-size:22px;line-height:22px;color:#222;">1</div>
<div class="t" style="left:2033px;width:277px;text-align:center;top:851.0px;height:22px;font-size:22px;line-height:22px;color:#222;">1~5</div>
<div class="t" style="left:2312px;width:158px;text-align:center;top:851.0px;height:22px;font-size:22px;line-height:22px;color:#222;">1</div>
<div class="a" style="left:2516px;top:842px;width:72px;height:39px;background:#fff;border:2px solid #20b5b8;border-radius:5px"></div>
<div class="t" style="left:2516px;width:72px;text-align:center;top:852.0px;height:21px;font-size:21px;line-height:21px;color:#20b5b8;">삭제</div>
<div class="a" style="left:74px;top:719.3px;width:56px;height:2.400000000000091px;background:#dc3a0d"></div>
<div class="a" style="left:125px;top:715.5px;width:10px;height:10.0px;background:#dc3a0d;border-radius:50%"></div>
<div class="a" style="left:30px;top:696px;width:48px;height:48px;background:#dc3a0d;border-radius:50%"></div>
<div class="t" style="left:30px;width:48px;text-align:center;top:703.5px;height:31px;font-size:31px;line-height:31px;font-weight:700;color:#fff;">1</div>
<div class="a" style="left:74px;top:777.3px;width:56px;height:2.400000000000091px;background:#dc3a0d"></div>
<div class="a" style="left:125px;top:773.5px;width:10px;height:10.0px;background:#dc3a0d;border-radius:50%"></div>
<div class="a" style="left:30px;top:754px;width:48px;height:48px;background:#dc3a0d;border-radius:50%"></div>
<div class="t" style="left:30px;width:48px;text-align:center;top:761.5px;height:31px;font-size:31px;line-height:31px;font-weight:700;color:#fff;">3</div>
<div class="a" style="left:74px;top:835.3px;width:56px;height:2.400000000000091px;background:#dc3a0d"></div>
<div class="a" style="left:125px;top:831.5px;width:10px;height:10.0px;background:#dc3a0d;border-radius:50%"></div>
<div class="a" style="left:30px;top:812px;width:48px;height:48px;background:#dc3a0d;border-radius:50%"></div>
<div class="t" style="left:30px;width:48px;text-align:center;top:819.5px;height:31px;font-size:31px;line-height:31px;font-weight:700;color:#fff;">5</div>
<div class="a" style="left:74px;top:893.3px;width:56px;height:2.400000000000091px;background:#dc3a0d"></div>
<div class="a" style="left:125px;top:889.5px;width:10px;height:10.0px;background:#dc3a0d;border-radius:50%"></div>
<div class="a" style="left:30px;top:870px;width:48px;height:48px;background:#dc3a0d;border-radius:50%"></div>
<div class="t" style="left:30px;width:48px;text-align:center;top:877.5px;height:31px;font-size:31px;line-height:31px;font-weight:700;color:#fff;">7</div>
<div class="a" style="left:70px;top:1045.3px;width:56px;height:2.400000000000091px;background:#dc3a0d"></div>
<div class="a" style="left:121px;top:1041.5px;width:10px;height:10.0px;background:#dc3a0d;border-radius:50%"></div>
<div class="a" style="left:26px;top:1022px;width:48px;height:48px;background:#dc3a0d;border-radius:50%"></div>
<div class="t" style="left:26px;width:48px;text-align:center;top:1029.5px;height:31px;font-size:31px;line-height:31px;font-weight:700;color:#fff;">9</div>
<div class="a" style="left:854px;top:719.3px;width:56px;height:2.400000000000091px;background:#dc3a0d"></div>
<div class="a" style="left:905px;top:715.5px;width:10px;height:10.0px;background:#dc3a0d;border-radius:50%"></div>
<div class="a" style="left:810px;top:696px;width:48px;height:48px;background:#dc3a0d;border-radius:50%"></div>
<div class="t" style="left:810px;width:48px;text-align:center;top:703.5px;height:31px;font-size:31px;line-height:31px;font-weight:700;color:#fff;">2</div>
<div class="a" style="left:854px;top:777.3px;width:56px;height:2.400000000000091px;background:#dc3a0d"></div>
<div class="a" style="left:905px;top:773.5px;width:10px;height:10.0px;background:#dc3a0d;border-radius:50%"></div>
<div class="a" style="left:810px;top:754px;width:48px;height:48px;background:#dc3a0d;border-radius:50%"></div>
<div class="t" style="left:810px;width:48px;text-align:center;top:761.5px;height:31px;font-size:31px;line-height:31px;font-weight:700;color:#fff;">4</div>
<div class="a" style="left:854px;top:835.3px;width:56px;height:2.400000000000091px;background:#dc3a0d"></div>
<div class="a" style="left:905px;top:831.5px;width:10px;height:10.0px;background:#dc3a0d;border-radius:50%"></div>
<div class="a" style="left:810px;top:812px;width:48px;height:48px;background:#dc3a0d;border-radius:50%"></div>
<div class="t" style="left:810px;width:48px;text-align:center;top:819.5px;height:31px;font-size:31px;line-height:31px;font-weight:700;color:#fff;">6</div>
<div class="a" style="left:854px;top:893.3px;width:56px;height:2.400000000000091px;background:#dc3a0d"></div>
<div class="a" style="left:905px;top:889.5px;width:10px;height:10.0px;background:#dc3a0d;border-radius:50%"></div>
<div class="a" style="left:810px;top:870px;width:48px;height:48px;background:#dc3a0d;border-radius:50%"></div>
<div class="t" style="left:810px;width:48px;text-align:center;top:877.5px;height:31px;font-size:31px;line-height:31px;font-weight:700;color:#fff;">8</div>
</body></html>
